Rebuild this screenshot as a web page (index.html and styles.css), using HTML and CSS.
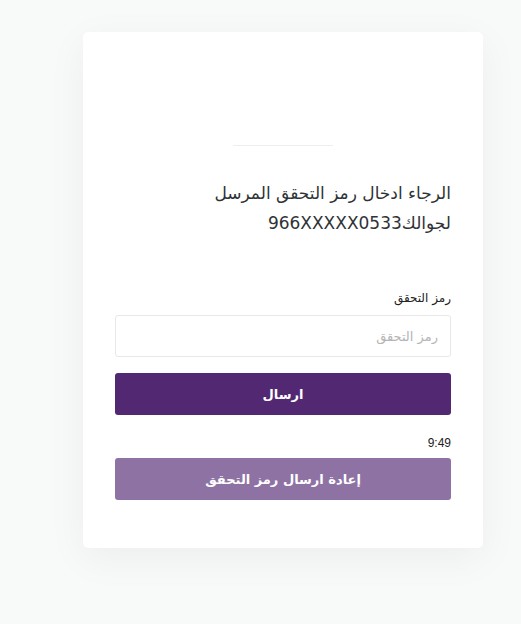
FILE: index.html
```html
<!DOCTYPE html>
<html lang="ar" dir="rtl">
<head>
<meta charset="utf-8">
<link rel="stylesheet" href="styles.css">
</head>
<body>
<div class="page">
  <div class="card">
    <div class="logo"></div>
    <div class="divider"></div>
    <h1 class="title">الرجاء ادخال رمز التحقق المرسل لجوالك966XXXXX0533</h1>
    <form class="form">
      <label class="label">رمز التحقق</label>
      <input class="input" type="text" placeholder="رمز التحقق">
      <button type="button" class="btn btn-primary">ارسال</button>
      <div class="timer">9:49</div>
      <button type="button" class="btn btn-secondary">إعادة ارسال رمز التحقق</button>
    </form>
  </div>
</div>
</body>
</html>
```
FILE: styles.css
```css
html, body {
  margin: 0;
  padding: 0;
}
body {
  background: #f8f9f9;
  font-family: "DejaVu Sans", "Noto Sans", sans-serif;
  width: 521px;
  height: 624px;
  overflow: hidden;
}
.page {
  padding-top: 32px;
  padding-left: 83px;
  direction: ltr;
}
.card {
  direction: rtl;
  width: 400px;
  height: 516px;
  box-sizing: border-box;
  background: #fff;
  border-radius: 5px;
  box-shadow: 0 10px 40px rgba(0, 0, 0, 0.05);
  padding: 0 32px;
}
.logo {
  height: 113px;
}
.divider {
  width: 100px;
  height: 1px;
  background: #eeeeee;
  margin: 0 auto;
}
.title {
  margin: 32px 0 0;
  font-size: 17px;
  font-weight: normal;
  line-height: 30px;
  color: #2f3336;
  width: 240px;
}
.form {
  display: flex;
  flex-direction: column;
  margin-top: 51px;
}
.label {
  font-size: 12px;
  color: #222;
  line-height: 18px;
}
.input {
  margin-top: 8px;
  height: 42px;
  box-sizing: border-box;
  border: 1px solid #e8e8e8;
  border-radius: 3px;
  padding: 0 12px;
  font-family: inherit;
  font-size: 13px;
  direction: rtl;
  outline: none;
}
.input::placeholder {
  color: #b5b5b5;
}
.btn {
  height: 42px;
  border: none;
  border-radius: 3px;
  color: #fff;
  font-family: inherit;
  font-weight: bold;
  font-size: 13px;
}
.btn-primary {
  margin-top: 16px;
  background: #522873;
}
.btn-secondary {
  background: #8e72a4;
}
.timer {
  margin-top: 19px;
  margin-bottom: 6px;
  font-size: 12px;
  line-height: 18px;
  color: #222;
  font-family: "Liberation Sans", sans-serif;
}
```
